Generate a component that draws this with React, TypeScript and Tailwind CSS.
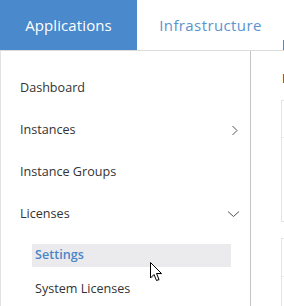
import React from "react";

const Item = ({ label, icon }: { label: string; icon?: React.ReactNode }) => (
  <div className="flex h-[42px] items-center justify-between pl-[19px] pr-[10px] text-[12.6px] text-[#333]">
    <span>{label}</span>
    {icon}
  </div>
);

const ChevronRight = () => (
  <svg width="8" height="11" viewBox="0 0 8 11" className="mr-[1px]">
    <path d="M1.5 1 L6 5.5 L1.5 10" fill="none" stroke="#555" strokeWidth="1" />
  </svg>
);

const ChevronDown = () => (
  <svg width="13" height="8" viewBox="0 0 13 8">
    <path d="M1 1.5 L6.5 6.5 L12 1.5" fill="none" stroke="#555" strokeWidth="1" />
  </svg>
);

export default function App() {
  return (
    <div
      className="relative h-[306px] w-[284px] overflow-hidden bg-white"
      style={{ fontFamily: '"Open Sans", "Noto Sans", sans-serif' }}
    >
      <div className="flex h-[50px]">
        <div className="flex w-[137px] items-center justify-center bg-[#4a89cb] text-[15px] tracking-[0.1px] text-white">
          Applications
        </div>
        <div className="relative flex flex-1 items-center justify-center text-[15px] tracking-[0.4px] text-[#5b93cf]">
          Infrastructure
          <div className="absolute right-0 top-[40px] h-[10px] w-[1px] bg-[#4a89cb]" />
        </div>
      </div>
      <div className="flex h-[256px] border-t border-[#dcdcdc]">
        <div className="w-[251px] shrink-0 border-l border-r border-l-[#e2e2e2] border-r-[#c4c4c4] pt-[16px]">
          <Item label="Dashboard" />
          <Item label="Instances" icon={<ChevronRight />} />
          <Item label="Instance Groups" />
          <Item label="Licenses" icon={<ChevronDown />} />
          <div className="ml-[31px] mr-[19px] mt-[9px] flex h-[23px] items-center bg-[#ebebed] pl-[3px] text-[12.6px] font-semibold text-[#4a86c6]">
            Settings
          </div>
          <div className="ml-[31px] mt-[11px] flex h-[22px] items-center pl-[3px] text-[12.6px] text-[#333]">
            System Licenses
          </div>
        </div>
        <div className="flex-1 pl-[30px] pt-[21px] whitespace-nowrap">
          <div className="ml-[1px] h-[12px] text-[13px] font-semibold leading-[12px] text-[#333]">License Settings</div>
          <div className="mt-[16px] h-[122px] w-[200px] border border-[#e4e4e4]">
            <div className="h-[37px] border-b border-[#ebebeb]" />
          </div>
          <div className="mt-[16px] h-[80px] w-[200px] border border-[#e4e4e4]">
            <div className="h-[38px] border-b border-[#ebebeb]" />
          </div>
        </div>
      </div>
      <svg
        className="absolute left-[149px] top-[261px]"
        width="16"
        height="22"
        viewBox="0 0 16 22"
      >
        <path
          d="M1.5 1.5 L1.5 17 L5 13.5 L7.5 19.5 L10 18.5 L7.5 12.5 L12.5 12.5 Z"
          fill="#999"
          opacity="0.35"
          transform="translate(1 1)"
        />
        <path
          d="M1.5 1.5 L1.5 17 L5 13.5 L7.5 19.5 L10 18.5 L7.5 12.5 L12.5 12.5 Z"
          fill="white"
          stroke="black"
          strokeWidth="1"
          strokeLinejoin="miter"
        />
      </svg>
    </div>
  );
}
